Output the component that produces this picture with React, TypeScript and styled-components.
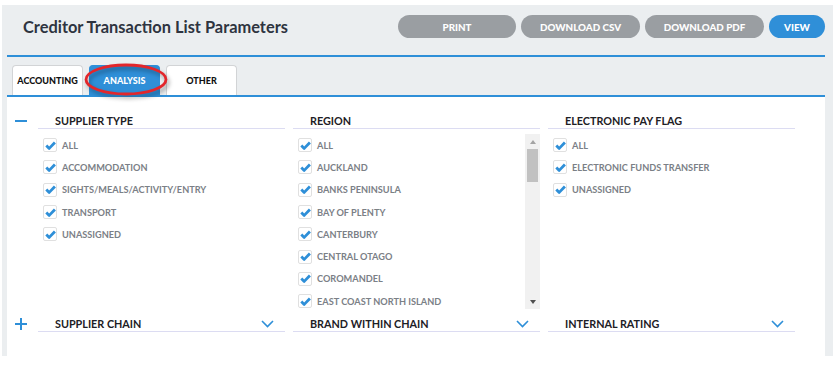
import styled, { createGlobalStyle } from "styled-components";

const GlobalStyle = createGlobalStyle`
  body {
    margin: 0;
    background: #ffffff;
    font-family: Lato, "Open Sans", sans-serif;
  }
`;

const Page = styled.div`
  padding: 5px 4px 12px 2px;
`;

const Panel = styled.div`
  background: #ebeef0;
  padding: 0 8px 0 5px;
`;

const Header = styled.div`
  height: 52px;
  box-sizing: border-box;
  display: flex;
  align-items: flex-start;
  justify-content: space-between;
  padding: 10px 0 0 16px;
  border-bottom: 2px solid #2e8fd8;
`;

const Title = styled.h1`
  margin: 0;
  font-size: 16.4px;
  line-height: 23px;
  font-weight: 700;
  color: #2e3440;
`;

const Buttons = styled.div`
  display: flex;
  gap: 5px;
`;

const ActionButton = styled.button<{ $primary?: boolean; $w: number }>`
  width: ${(p) => p.$w}px;
  height: 23px;
  border: none;
  border-radius: 12px;
  background: ${(p) => (p.$primary ? "#2f8fd8" : "#9a9ea2")};
  color: #ffffff;
  font-family: Lato, "Open Sans", sans-serif;
  font-size: 9.8px;
  font-weight: 900;
  cursor: pointer;
`;

const TabsBar = styled.div`
  position: relative;
  height: 38px;
  display: flex;
  align-items: flex-end;
  gap: 6px;
  padding-left: 5px;
  border-bottom: 2px solid #2e8fd8;
`;

const Tab = styled.div<{ $active?: boolean }>`
  width: 71px;
  height: 30px;
  box-sizing: border-box;
  display: flex;
  align-items: center;
  justify-content: center;
  border: 1px solid ${(p) => (p.$active ? "#2f8fd8" : "#d2d4d6")};
  border-bottom: none;
  border-radius: 4px 4px 0 0;
  background: ${(p) => (p.$active ? "#2f8fd8" : "#ffffff")};
  color: ${(p) => (p.$active ? "#ffffff" : "#111111")};
  font-size: 9px;
  font-weight: 900;
`;

const Highlight = styled.svg`
  position: absolute;
  left: 77px;
  top: 6px;
  width: 84px;
  height: 33px;
  overflow: visible;
  filter: drop-shadow(2px 3px 2px rgba(0, 0, 0, 0.35));
  pointer-events: none;
`;

const Content = styled.div`
  background: #ffffff;
  height: 259px;
  box-sizing: border-box;
  padding: 16px 0 0 8px;
  display: flex;
  flex-direction: column;
  gap: 7px;
`;

const Group = styled.div`
  display: flex;
`;

const Toggle = styled.div`
  width: 23px;
  height: 15px;
  display: flex;
  align-items: center;
`;

const Columns = styled.div`
  display: grid;
  grid-template-columns: repeat(3, 247px);
  column-gap: 8px;
`;

const ColumnHeader = styled.div`
  height: 15px;
  display: flex;
  align-items: center;
  justify-content: space-between;
  padding: 0 11px 0 17px;
  border-bottom: 1px solid #dcdcf2;
  font-size: 10.8px;
  font-weight: 700;
  color: #1d2025;
`;

const ListBox = styled.div`
  margin-top: 5px;
  height: 175px;
  display: flex;
  overflow: hidden;
`;

const Items = styled.div`
  flex: 1;
  overflow: hidden;
`;

const Item = styled.div`
  height: 22.3px;
  display: flex;
  align-items: center;
  gap: 5px;
  padding-left: 5px;
  font-size: 9.2px;
  font-weight: 700;
  color: #7b8086;
  white-space: nowrap;
`;

const Box = styled.span`
  width: 14px;
  height: 14px;
  box-sizing: border-box;
  border: 1px solid #e0e0e0;
  border-radius: 2px;
  background: #ffffff;
  display: flex;
  align-items: center;
  justify-content: center;
`;

const Scrollbar = styled.div`
  width: 15px;
  background: #f1f1f1;
  display: flex;
  flex-direction: column;
  align-items: center;
`;

const Arrow = styled.div<{ $down?: boolean }>`
  height: 15px;
  display: flex;
  align-items: center;
  justify-content: center;
  &::after {
    content: "";
    border-left: 3.5px solid transparent;
    border-right: 3.5px solid transparent;
    ${(p) =>
      p.$down
        ? "border-top: 4px solid #505050;"
        : "border-bottom: 4px solid #a3a3a3;"}
  }
`;

const Thumb = styled.div`
  width: 11px;
  height: 33px;
  background: #c1c1c1;
`;

const Track = styled.div`
  flex: 1;
`;

function Check() {
  return (
    <svg width="11" height="9" viewBox="0 0 11 9">
      <path
        d="M1.3 4.5 L4.2 7.4 L9.9 1.5"
        fill="none"
        stroke="#2e8fd8"
        strokeWidth="2.8"
        strokeLinejoin="round"
      />
    </svg>
  );
}

function Chevron() {
  return (
    <svg width="13" height="8" viewBox="0 0 13 8">
      <path d="M1 1 L6.5 6.5 L12 1" fill="none" stroke="#2e8fd8" strokeWidth="1.6" />
    </svg>
  );
}

function Minus() {
  return (
    <svg width="12" height="4" viewBox="0 0 12 4">
      <rect x="0" y="1" width="12" height="2" fill="#2e8fd8" />
    </svg>
  );
}

function Plus() {
  return (
    <svg width="12" height="12" viewBox="0 0 12 12">
      <rect x="0" y="5" width="12" height="2" fill="#2e8fd8" />
      <rect x="5" y="0" width="2" height="12" fill="#2e8fd8" />
    </svg>
  );
}

const supplierTypes = [
  "ALL",
  "ACCOMMODATION",
  "SIGHTS/MEALS/ACTIVITY/ENTRY",
  "TRANSPORT",
  "UNASSIGNED",
];

const regions = [
  "ALL",
  "AUCKLAND",
  "BANKS PENINSULA",
  "BAY OF PLENTY",
  "CANTERBURY",
  "CENTRAL OTAGO",
  "COROMANDEL",
  "EAST COAST NORTH ISLAND",
];

const payFlags = ["ALL", "ELECTRONIC FUNDS TRANSFER", "UNASSIGNED"];

function CheckList({ items }: { items: string[] }) {
  return (
    <Items>
      {items.map((label) => (
        <Item key={label}>
          <Box>
            <Check />
          </Box>
          {label}
        </Item>
      ))}
    </Items>
  );
}

export default function App() {
  return (
    <>
      <GlobalStyle />
      <Page>
        <Panel>
          <Header>
            <Title>Creditor Transaction List Parameters</Title>
            <Buttons>
              <ActionButton $w={118}>PRINT</ActionButton>
              <ActionButton $w={119}>DOWNLOAD CSV</ActionButton>
              <ActionButton $w={119}>DOWNLOAD PDF</ActionButton>
              <ActionButton $w={56} $primary>
                VIEW
              </ActionButton>
            </Buttons>
          </Header>
          <TabsBar>
            <Tab>ACCOUNTING</Tab>
            <Tab $active>ANALYSIS</Tab>
            <Tab>OTHER</Tab>
            <Highlight viewBox="0 0 84 33">
              <ellipse cx="42" cy="16.5" rx="40" ry="14.5" fill="none" stroke="#e3262b" strokeWidth="2.8" />
            </Highlight>
          </TabsBar>
          <Content>
            <Group>
              <Toggle>
                <Minus />
              </Toggle>
              <Columns>
                <div>
                  <ColumnHeader>SUPPLIER TYPE</ColumnHeader>
                  <ListBox>
                    <CheckList items={supplierTypes} />
                  </ListBox>
                </div>
                <div>
                  <ColumnHeader>REGION</ColumnHeader>
                  <ListBox>
                    <CheckList items={regions} />
                    <Scrollbar>
                      <Arrow />
                      <Thumb />
                      <Track />
                      <Arrow $down />
                    </Scrollbar>
                  </ListBox>
                </div>
                <div>
                  <ColumnHeader>ELECTRONIC PAY FLAG</ColumnHeader>
                  <ListBox>
                    <CheckList items={payFlags} />
                  </ListBox>
                </div>
              </Columns>
            </Group>
            <Group>
              <Toggle>
                <Plus />
              </Toggle>
              <Columns>
                <ColumnHeader>
                  SUPPLIER CHAIN
                  <Chevron />
                </ColumnHeader>
                <ColumnHeader>
                  BRAND WITHIN CHAIN
                  <Chevron />
                </ColumnHeader>
                <ColumnHeader>
                  INTERNAL RATING
                  <Chevron />
                </ColumnHeader>
              </Columns>
            </Group>
          </Content>
        </Panel>
      </Page>
    </>
  );
}
